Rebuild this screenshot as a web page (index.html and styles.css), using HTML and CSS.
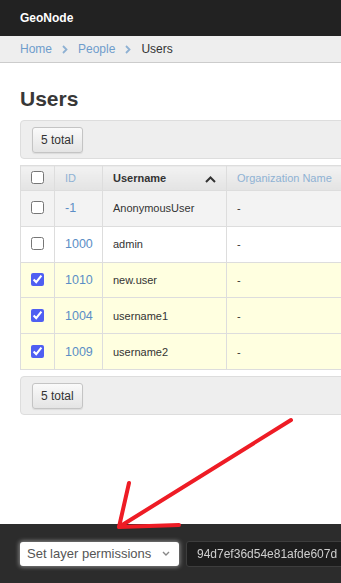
FILE: index.html
```html
<!DOCTYPE html>
<html lang="en">
<head>
    <meta charset="UTF-8">
    <meta name="viewport" content="width=device-width, initial-scale=1.0">
    <title>Users - GeoNode</title>
    <link rel="stylesheet" href="styles.css">
</head>
<body>

<div class="navbar">
    <span class="brand">GeoNode</span>
</div>

<div class="breadcrumb">
    <a href="#">Home</a>
    <svg class="sep" width="6" height="9" viewBox="0 0 6 9"><polyline points="1,1 4.5,4.5 1,8" fill="none" stroke="#8eb1d3" stroke-width="1.8"/></svg>
    <a href="#">People</a>
    <svg class="sep" width="6" height="9" viewBox="0 0 6 9"><polyline points="1,1 4.5,4.5 1,8" fill="none" stroke="#8eb1d3" stroke-width="1.8"/></svg>
    <span class="current">Users</span>
</div>

<div class="content">
    <h1>Users</h1>

    <div class="toolbar">
        <button class="btn">5 total</button>
    </div>

    <table class="user-table">
        <colgroup>
            <col class="col-check">
            <col class="col-id">
            <col class="col-name">
            <col>
        </colgroup>
        <thead>
            <tr>
                <th class="check"><input type="checkbox"></th>
                <th class="link-head">ID</th>
                <th class="sorted">
                    <span>Username</span>
                    <svg width="11" height="7" viewBox="0 0 11 7"><polyline points="1,6 5.5,1.5 10,6" fill="none" stroke="#333" stroke-width="2"/></svg>
                </th>
                <th class="link-head">Organization Name</th>
            </tr>
        </thead>
        <tbody>
            <tr class="odd">
                <td class="check"><input type="checkbox"></td>
                <td><a href="#">-1</a></td>
                <td>AnonymousUser</td>
                <td>-</td>
            </tr>
            <tr>
                <td class="check"><input type="checkbox"></td>
                <td><a href="#">1000</a></td>
                <td>admin</td>
                <td>-</td>
            </tr>
            <tr class="selected">
                <td class="check"><input type="checkbox" checked></td>
                <td><a href="#">1010</a></td>
                <td>new.user</td>
                <td>-</td>
            </tr>
            <tr class="selected">
                <td class="check"><input type="checkbox" checked></td>
                <td><a href="#">1004</a></td>
                <td>username1</td>
                <td>-</td>
            </tr>
            <tr class="selected">
                <td class="check"><input type="checkbox" checked></td>
                <td><a href="#">1009</a></td>
                <td>username2</td>
                <td>-</td>
            </tr>
        </tbody>
    </table>

    <div class="toolbar">
        <button class="btn">5 total</button>
    </div>
</div>

<div class="action-bar">
    <div class="select-box">
        <span>Set layer permissions</span>
        <svg width="8" height="5" viewBox="0 0 8 5"><polyline points="1,1 4,4 7,1" fill="none" stroke="#888" stroke-width="1.4"/></svg>
    </div>
    <input class="token" type="text" value="94d7ef36d54e81afde607d">
</div>

<!-- annotation arrow -->
<svg class="annotation" width="341" height="583" viewBox="0 0 341 583">
    <g fill="none" stroke="#ee1c25" stroke-width="4" stroke-linecap="round" stroke-linejoin="round">
        <line x1="291" y1="420" x2="119" y2="527"/>
        <polyline points="129,483 119,527 179,525"/>
    </g>
</svg>

</body>
</html>
```

FILE: styles.css
```css
body {
    font-family: "Liberation Sans", Arial, sans-serif;
    margin: 0;
    padding: 0;
    height: 583px;
    overflow: hidden;
    background-color: #fff;
    color: #333;
    position: relative;
}
a {
    color: #5b8ec6;
    text-decoration: none;
}

.navbar {
    height: 36px;
    background-color: #222;
    padding: 0 20px;
    display: flex;
    align-items: center;
}
.brand {
    color: #fff;
    font-weight: bold;
    font-size: 12px;
}

.breadcrumb {
    height: 26px;
    background-color: #eee;
    border-bottom: 1px solid #ccc;
    padding: 0 20px;
    display: flex;
    align-items: center;
    gap: 10px;
    font-size: 12px;
}
.breadcrumb a {
    color: #6e9dcc;
}
.breadcrumb .current {
    color: #333;
}

.content {
    width: 1000px;
    padding: 0 20px;
}
h1 {
    font-size: 21px;
    line-height: 24px;
    margin: 24px 0 9px;
    color: #383838;
}

.toolbar {
    background-color: #eee;
    border: 1px solid #ddd;
    border-radius: 4px;
    padding: 6px 11px 5px;
}
.btn {
    height: 26px;
    padding: 0 8px;
    font-family: inherit;
    font-size: 12px;
    color: #333;
    border: 1px solid #c4c4c4;
    border-radius: 3px;
    background: linear-gradient(#fafafa, #e4e4e4);
    box-shadow: 0 1px 1px rgba(0, 0, 0, 0.08);
}

.user-table {
    width: 100%;
    margin: 6px 0;
    border-collapse: collapse;
    table-layout: fixed;
    font-size: 11px;
    border: 1px solid #ddd;
}
.col-check { width: 34px; }
.col-id { width: 48px; }
.col-name { width: 124px; }

.user-table th,
.user-table td {
    border: 1px solid #ddd;
    padding: 0 10px;
    text-align: left;
}
.user-table th {
    height: 24px;
    background: linear-gradient(#f2f2f2, #e3e3e3);
    font-weight: normal;
}
.user-table th.sorted {
    font-weight: bold;
    color: #333;
}
.user-table th.sorted span {
    display: inline-block;
}
.user-table th.sorted svg {
    float: right;
    margin-top: 4px;
}
.user-table .link-head {
    color: #8fb2d4;
}
.user-table td {
    height: 34.8px;
    background-color: #fff;
}
.user-table td a {
    font-size: 12.5px;
}
.user-table tr.odd td {
    background-color: #f3f3f3;
}
.user-table tr.selected td {
    background-color: #ffffe0;
}
.user-table .check {
    padding: 0;
    text-align: center;
}
.user-table input[type="checkbox"] {
    width: 13px;
    height: 13px;
    margin: 0;
    vertical-align: middle;
    accent-color: #4f5ff2;
}
.user-table th input[type="checkbox"] {
    margin-top: -3px;
}
.user-table td input[type="checkbox"] {
    margin-top: -3px;
}

.action-bar {
    position: fixed;
    left: 0;
    bottom: 0;
    width: 100%;
    height: 59px;
    background-color: #2c2c2c;
    padding: 0 20px;
    box-sizing: border-box;
    display: flex;
    align-items: center;
    gap: 7px;
}
.select-box {
    width: 159px;
    height: 24px;
    flex-shrink: 0;
    box-sizing: border-box;
    background-color: #fff;
    border-radius: 3px;
    box-shadow: 0 0 4px 1px rgba(255, 255, 255, 0.45);
    padding: 0 9px 0 7px;
    display: flex;
    align-items: center;
    justify-content: space-between;
    font-size: 13px;
    color: #555;
}
.token {
    width: 320px;
    height: 26px;
    flex-shrink: 0;
    box-sizing: border-box;
    background-color: #1d1d1d;
    border: 1px solid #3d3d3d;
    border-radius: 3px;
    padding: 0 10px;
    font-family: inherit;
    font-size: 12px;
    color: #cfcfcf;
}

.annotation {
    position: absolute;
    top: 0;
    left: 0;
    pointer-events: none;
    z-index: 10;
}
```
